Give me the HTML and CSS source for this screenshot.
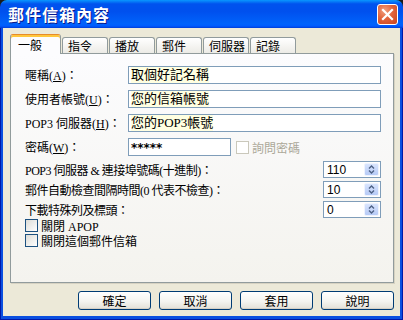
FILE: index.html
```html
<!DOCTYPE html>
<html lang="zh-Hant">
<head>
<meta charset="utf-8">
<title>郵件信箱內容</title>
<link rel="stylesheet" href="styles.css">
</head>
<body>
<div class="window">
  <div class="titlebar">
    <span class="title">郵件信箱內容</span>
    <span class="close">
      <svg width="13" height="13" viewBox="0 0 13 13"><path d="M2 2 L11 11 M11 2 L2 11" stroke="#fff" stroke-width="2.2" stroke-linecap="square"/></svg>
    </span>
  </div>
  <div class="frame">
    <div class="body">
      <div class="tabs">
        <div class="tab active">一般</div>
        <div class="tab">指令</div>
        <div class="tab">播放</div>
        <div class="tab">郵件</div>
        <div class="tab">伺服器</div>
        <div class="tab">記錄</div>
      </div>
      <div class="panel">
        <div class="row field">
          <span class="lbl">暱稱(<u>A</u>)：</span>
          <span class="input wide"><span class="hint">取個好記名稱</span></span>
        </div>
        <div class="row field">
          <span class="lbl">使用者帳號(<u>U</u>)：</span>
          <span class="input wide"><span class="hint">您的信箱帳號</span></span>
        </div>
        <div class="row field">
          <span class="lbl">POP3 伺服器(<u>H</u>)：</span>
          <span class="input wide"><span class="hint">您的POP3帳號</span></span>
        </div>
        <div class="row field last">
          <span class="lbl">密碼(<u>W</u>)：</span>
          <span class="input short"><span class="stars">*****</span></span>
          <span class="check disabled"><span class="box"></span>詢問密碼</span>
        </div>
        <div class="row spin-row">
          <span class="grow">POP3 伺服器 &amp; 連接埠號碼(十進制)：</span>
          <span class="spinner"><span class="val">110</span><span class="spinbtn"><svg width="13" height="11" viewBox="0 0 13 11"><path d="M4 4.5 L6.5 2 L9 4.5 M4 6.5 L6.5 9 L9 6.5" fill="none" stroke="#4D6185" stroke-width="1.4"/></svg></span></span>
        </div>
        <div class="row spin-row">
          <span class="grow">郵件自動檢查間隔時間(0 代表不檢查)：</span>
          <span class="spinner"><span class="val">10</span><span class="spinbtn"><svg width="13" height="11" viewBox="0 0 13 11"><path d="M4 4.5 L6.5 2 L9 4.5 M4 6.5 L6.5 9 L9 6.5" fill="none" stroke="#4D6185" stroke-width="1.4"/></svg></span></span>
        </div>
        <div class="row spin-row last">
          <span class="grow">下載特殊列及標頭：</span>
          <span class="spinner"><span class="val">0</span><span class="spinbtn"><svg width="13" height="11" viewBox="0 0 13 11"><path d="M4 4.5 L6.5 2 L9 4.5 M4 6.5 L6.5 9 L9 6.5" fill="none" stroke="#4D6185" stroke-width="1.4"/></svg></span></span>
        </div>
        <div class="row chk-row"><span class="box"></span>關閉 APOP</div>
        <div class="row chk-row"><span class="box"></span>關閉這個郵件信箱</div>
      </div>
      <div class="buttons">
        <div class="btn">確定</div>
        <div class="btn">取消</div>
        <div class="btn">套用</div>
        <div class="btn">說明</div>
      </div>
    </div>
  </div>
</div>
</body>
</html>
```

FILE: styles.css
```css
html, body { margin:0; padding:0; background:#1a1a1a; }
body { font-family:"Liberation Serif", "Noto Sans CJK TC", serif; font-size:12px; color:#000; }

.window { width:403px; height:320px; display:flex; flex-direction:column; border-radius:7px 7px 0 0; overflow:hidden; }

.titlebar { height:28px; flex-shrink:0; display:flex; align-items:center; padding:0 5px 0 8px; background:linear-gradient(#0997FF 0, #0053EE 14%, #0050EE 40%, #0063FB 85%, #005BFF 93%, #003DD7 100%); }
.title { flex:1; color:#fff; font:bold 16px/20px "Noto Sans CJK TC", sans-serif; letter-spacing:1px; text-shadow:1px 1px #0A1A8C; }
.close { width:21px; height:21px; box-sizing:border-box; border:1px solid #fff; border-radius:3px; background:radial-gradient(circle at 35% 30%, #F0A080 0, #E2643C 45%, #C8421B 100%); display:flex; align-items:center; justify-content:center; }

.frame { flex:1; display:flex; padding:0 3px 4px; background:#0A4FE0; box-shadow:inset 1px 0 #0019A8, inset -1px 0 #0019A8, inset 0 -1px #0019A8; }
.body { flex:1; background:#ECE9D8; padding:6px 6px 0 7px; display:flex; flex-direction:column; }

.tabs { display:flex; align-items:flex-end; height:19px; }
.tab { box-sizing:border-box; width:46px; height:16px; margin-left:1px; padding:1px 0 0 5px; border:1px solid #919B9C; border-bottom:none; border-radius:3px 3px 0 0; background:linear-gradient(#FFFFFF, #ECEBE6); font:12px/14px "Noto Sans CJK TC", sans-serif; }
.tab.active { width:51px; height:20px; margin:0 0 -1px 0; padding:1px 0 0 7px; position:relative; z-index:1; background:#FCFCFE; border-top-color:#E68B2C; box-shadow:inset 0 2px #FFC73C; line-height:18px; }

.panel { box-sizing:border-box; height:230px; border:1px solid #919B9C; background:linear-gradient(#FCFCFE, #F4F3EE); box-shadow:1px 1px 0 #D6D2C2; padding:12px 12px 0 14px; display:flex; flex-direction:column; }

.row { display:flex; align-items:center; }
.field { height:18px; margin-bottom:6px; }
.field.last { margin-bottom:5px; }
.lbl { width:103px; flex-shrink:0; white-space:nowrap; }
.input { box-sizing:border-box; height:18px; border:1px solid #7F9DB9; background:#fff; padding-left:2px; display:flex; align-items:center; font-size:13px; }
.input.wide { width:253px; }
.input.short { width:103px; }
.hint { background:#FFFFE1; line-height:16px; }
.stars { font:bold 12px/16px "DejaVu Sans", sans-serif; margin-top:2px; }

.check { display:flex; align-items:center; margin-left:5px; }
.check.disabled { color:#ACA899; font-family:"Noto Sans CJK TC", sans-serif; }
.check.disabled .box { border-color:#CAC8BB; background:#fff; }

.spin-row { height:17px; margin-bottom:3px; }
.spin-row.last { margin-bottom:1px; }
.grow { flex:1; white-space:nowrap; letter-spacing:-0.5px; }
.spinner { box-sizing:border-box; width:58px; height:17px; border:1px solid #7F9DB9; background:#fff; display:flex; align-items:center; justify-content:space-between; padding:1px 1px 1px 0; }
.val { padding-left:3px; font:12px/14px "Liberation Sans", sans-serif; }
.spinbtn { box-sizing:border-box; width:15px; height:13px; border:1px solid #EEF3FE; border-radius:2px; background:linear-gradient(#D8E4FD, #B6CAF6); display:flex; align-items:center; justify-content:center; }

.chk-row { height:13px; margin-bottom:2px; }
.box { box-sizing:border-box; width:13px; height:13px; flex-shrink:0; border:1px solid #1C5180; background:linear-gradient(135deg, #DCDCD7, #FFFFFF); margin-right:3px; }

.buttons { display:flex; justify-content:flex-end; gap:8px; margin-top:8px; }
.btn { box-sizing:border-box; width:73px; height:19px; border:1px solid #003C74; border-radius:3px; background:linear-gradient(#FFFFFF, #F4F4F0 55%, #E3E0D7); box-shadow:inset 0 -1px #D6D0C5; display:flex; align-items:center; justify-content:center; font:12px/14px "Noto Sans CJK TC", sans-serif; }
```
